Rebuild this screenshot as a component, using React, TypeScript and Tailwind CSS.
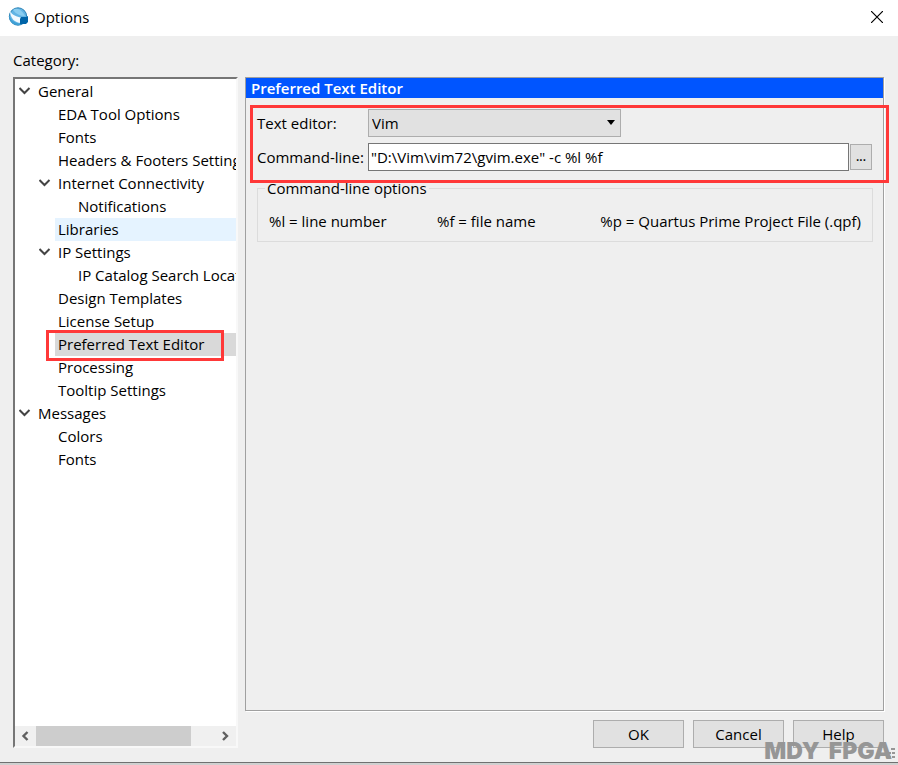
import type { ReactNode } from "react";

type Item = { label: string; level: 0 | 1 | 2; open?: boolean; state?: "hover" | "selected" };

const items: Item[] = [
  { label: "General", level: 0, open: true },
  { label: "EDA Tool Options", level: 1 },
  { label: "Fonts", level: 1 },
  { label: "Headers & Footers Settings", level: 1 },
  { label: "Internet Connectivity", level: 1, open: true },
  { label: "Notifications", level: 2 },
  { label: "Libraries", level: 1, state: "hover" },
  { label: "IP Settings", level: 1, open: true },
  { label: "IP Catalog Search Locations", level: 2 },
  { label: "Design Templates", level: 1 },
  { label: "License Setup", level: 1 },
  { label: "Preferred Text Editor", level: 1, state: "selected" },
  { label: "Processing", level: 1 },
  { label: "Tooltip Settings", level: 1 },
  { label: "Messages", level: 0, open: true },
  { label: "Colors", level: 1 },
  { label: "Fonts", level: 1 },
];

const indent = { 0: "pl-0", 1: "pl-5", 2: "pl-10" };
const fill = { hover: "bg-[#e5f3ff]", selected: "bg-[#d9d9d9]", none: "" };

function AppLogo() {
  return (
    <svg width="22" height="20" viewBox="0 0 22 20" aria-hidden="true">
      <circle cx="10" cy="9.5" r="8.7" fill="#62b4e4" stroke="#2c83b6" />
      <path d="M5 3C9 0 14 3 17 9C12 9 8 7 5 3Z" fill="#8acdf0" />
      <path d="M2 4C4 8 9 10 13 10.5L13 16C7 16 2 11 2 4Z" fill="#f3faff" />
      <path d="M1 8C3 14 8 17 14 16.5C9 20 1 17 1 8Z" fill="#3fa0d5" />
      <path d="M13 10L18 10L20 9V15L18 17H12V12Z" fill="#0064a8" />
    </svg>
  );
}

function Chevron() {
  return (
    <svg width="12" height="8" viewBox="0 0 12 8" fill="none" stroke="#444" strokeWidth="2" aria-hidden="true">
      <path d="M0.5 1L5.5 6L10.5 1" />
    </svg>
  );
}

function TreeRow({ item }: { item: Item }) {
  return (
    <li className={`flex h-[23px] items-center ${indent[item.level]}`}>
      <span className="flex w-5 shrink-0 items-center justify-center pb-0.5">{item.open && <Chevron />}</span>
      <button type="button" className={`h-full min-w-0 flex-1 overflow-hidden pb-0.5 pl-[3px] text-left whitespace-nowrap ${fill[item.state ?? "none"]}`}>
        {item.label}
      </button>
    </li>
  );
}

function Arrow({ d, label }: { d: string; label: string }) {
  return (
    <button type="button" aria-label={label} className="flex w-[21px] items-center justify-center">
      <svg width="10" height="10" viewBox="0 0 10 10" fill="none" stroke="#606060" strokeWidth="2.4" aria-hidden="true">
        <path d={d} />
      </svg>
    </button>
  );
}

function DialogButton({ children }: { children: ReactNode }) {
  return (
    <button type="button" className="h-7 w-[91px] border border-[#adadad] bg-[#e1e1e1]">
      {children}
    </button>
  );
}

export default function App() {
  return (
    <div className="relative flex min-h-screen flex-col bg-[#d0d0d0] pb-0.5 font-['Open_Sans','Noto_Sans',sans-serif] text-[15px] leading-5 text-black">
      <header className="flex h-9 shrink-0 items-center bg-white pr-[11px] pb-0.5 pl-2">
        <AppLogo />
        <h1 className="ml-1 flex-1">Options</h1>
        <button type="button" aria-label="Close" className="flex h-6 w-5 items-center justify-center">
          <svg width="12" height="12" viewBox="0 0 12 12" stroke="black" strokeWidth="1.2" aria-hidden="true">
            <path d="M0 0L12 12M12 0L0 12" />
          </svg>
        </button>
      </header>

      <main className="flex flex-1 flex-col border-b border-[#707070] bg-[#efefef] pt-3.5 pr-3.5 pb-3.5 pl-[13px]">
        <h2 className="mb-[7px]">Category:</h2>
        <div className="flex flex-1 gap-[7px]">
          <nav aria-label="Category" className="relative flex w-[225px] shrink-0 flex-col border-2 border-t-[#767676] border-r-[#f8f8f8] border-b-[#f8f8f8] border-l-[#767676] bg-white">
            <ul className="flex-1 pt-px">
              {items.map((item, i) => (
                <TreeRow key={i} item={item} />
              ))}
            </ul>
            <div className="flex h-5 bg-[#f0f0f0]">
              <Arrow label="Scroll left" d="M6.5 1L2.5 5L6.5 9" />
              <div className="w-[155px] bg-[#cdcdcd]" />
              <div className="flex-1" />
              <Arrow label="Scroll right" d="M2 1L6 5L2 9" />
            </div>
            <div className="pointer-events-none absolute top-[251px] left-[31px] h-[31px] w-[178px] border-3 border-[#ff3838]" />
          </nav>

          <div className="flex min-w-0 flex-1 flex-col gap-[9px]">
            <section className="relative flex-1 border border-[#a0a0a0] shadow-[1px_1px_0_white]">
              <h2 className="h-5 bg-[#0055ff] pl-[5px] font-semibold text-white">Preferred Text Editor</h2>
              <div className="grid grid-cols-[111px_1fr] items-center gap-y-1.5 pt-[11px] pr-[11px] pl-[11px]">
                <label htmlFor="editor">Text editor:</label>
                <div className="relative h-7 w-[253px] max-w-full">
                  <select id="editor" className="h-full w-full appearance-none border border-[#adadad] bg-[#e1e1e1] px-[3px]">
                    <option>Vim</option>
                  </select>
                  <svg className="pointer-events-none absolute top-[11px] right-1.5" width="8" height="5" viewBox="0 0 8 5" aria-hidden="true">
                    <path d="M0 0H8L4 5Z" />
                  </svg>
                </div>
                <label htmlFor="command">Command-line:</label>
                <div className="flex items-center gap-px">
                  <input id="command" type="text" defaultValue={'"D:\\Vim\\vim72\\gvim.exe" -c %l %f'} className="h-7 min-w-0 flex-1 border border-[#767676] bg-white px-0.5" />
                  <button type="button" aria-label="Browse" className="h-[26px] w-[22px] border border-[#adadad] bg-[#e1e1e1] text-xs font-semibold">...</button>
                </div>
              </div>
              <fieldset className="mr-2.5 ml-[11px] mt-[7px] h-16 border border-[#dcdcdc] px-[11px]">
                <legend className="-ml-1 px-0.5">Command-line options</legend>
                <div className="flex justify-between pt-[13px] whitespace-nowrap">
                  <span className="w-[168px]">%l = line number</span>
                  <span className="flex-1">%f = file name</span>
                  <span>%p = Quartus Prime Project File (.qpf)</span>
                </div>
              </fieldset>
              <div className="pointer-events-none absolute top-[27px] -right-1.5 left-1 h-[78px] border-3 border-[#ff3838]" />
            </section>
            <footer className="flex justify-end gap-[9px]">
              <DialogButton>OK</DialogButton>
              <DialogButton>Cancel</DialogButton>
              <DialogButton>Help</DialogButton>
            </footer>
          </div>
        </div>
      </main>
      <div className="pointer-events-none absolute right-[3px] bottom-0.5 flex items-end text-[#969696]">
        <span className="font-['Inter',sans-serif] text-[23px] leading-6 font-black whitespace-pre">MDY  FPGA</span>
        <svg className="-ml-1.5 mb-1" width="9" height="11" viewBox="0 0 9 11" fill="currentColor" aria-hidden="true">
          <path d="M5 0H9V2H5ZM3 4H5V6H3ZM6 4H9V6H6ZM0 8H2V10H0ZM3 8H5V10H3ZM6 8H9V10H6Z" />
        </svg>
      </div>
    </div>
  );
}
